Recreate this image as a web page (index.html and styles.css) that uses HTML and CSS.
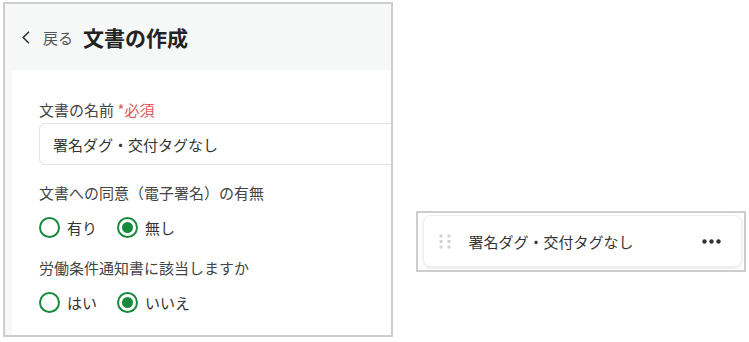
FILE: index.html
```html
<!DOCTYPE html>
<html lang="ja">
<head>
  <meta charset="UTF-8">
  <title>文書の作成</title>
  <meta name="viewport" content="width=device-width, initial-scale=1.0">
  <link rel="stylesheet" href="styles.css">
</head>
<body>

<div class="page">
  <div class="panel">
    <div class="header">
      <a href="#" class="back">
        <svg width="10" height="13" viewBox="0 0 10 13"><path d="M8 0.8 L2.2 6.5 L8 12.2" fill="none" stroke="#333" stroke-width="1.6"/></svg>
        <span>戻る</span>
      </a>
      <h1>文書の作成</h1>
    </div>

    <div class="form-card">
      <div class="label">文書の名前 <span class="required">*必須</span></div>
      <div class="input">署名ダグ・交付タグなし</div>

      <div class="label q">文書への同意（電子署名）の有無</div>
      <div class="radios">
        <label class="radio"><span class="circle"></span>有り</label>
        <label class="radio"><span class="circle checked"></span>無し</label>
      </div>

      <div class="label q2">労働条件通知書に該当しますか</div>
      <div class="radios">
        <label class="radio"><span class="circle"></span>はい</label>
        <label class="radio"><span class="circle checked"></span>いいえ</label>
      </div>
    </div>
  </div>

  <div class="side">
    <div class="item">
      <svg class="handle" width="12" height="15" viewBox="0 0 12 15">
        <circle cx="2" cy="2" r="1.7" fill="#d2d2d2"/>
        <circle cx="10" cy="2" r="1.7" fill="#d2d2d2"/>
        <circle cx="2" cy="7.5" r="1.7" fill="#d2d2d2"/>
        <circle cx="10" cy="7.5" r="1.7" fill="#d2d2d2"/>
        <circle cx="2" cy="13" r="1.7" fill="#d2d2d2"/>
        <circle cx="10" cy="13" r="1.7" fill="#d2d2d2"/>
      </svg>
      <span class="item-name">署名ダグ・交付タグなし</span>
      <svg class="more" width="19" height="5" viewBox="0 0 19 5">
        <circle cx="2.5" cy="2.5" r="2.2" fill="#333"/>
        <circle cx="9.5" cy="2.5" r="2.2" fill="#333"/>
        <circle cx="16.5" cy="2.5" r="2.2" fill="#333"/>
      </svg>
    </div>
  </div>
</div>

</body>
</html>
```

FILE: styles.css
```css
:root {
  --green: #188a3c;
  --border: #cdcdcd;
  --header-bg: #f6f8f7;
  --text: #333;
  --red: #e2585b;
}

* {
  box-sizing: border-box;
}

body {
  margin: 0;
  font-family: "Noto Sans CJK JP", "Noto Sans", sans-serif;
  background: #fff;
  color: var(--text);
}

.page {
  display: flex;
  align-items: flex-start;
  gap: 23px;
  padding: 2px 3px;
}

/* left panel */
.panel {
  width: 391px;
  height: 335px;
  border: 2px solid var(--border);
  background: var(--header-bg);
  overflow: hidden;
  display: flex;
  flex-direction: column;
}

.header {
  height: 66px;
  display: flex;
  align-items: center;
  padding-left: 16px;
  flex-shrink: 0;
}

.back {
  display: flex;
  align-items: center;
  gap: 12px;
  color: #555;
  text-decoration: none;
  font-size: 15px;
  margin-right: 10px;
}

.header h1 {
  margin: 0;
  font-size: 21px;
  font-weight: bold;
  color: #222;
  line-height: 1;
}

.form-card {
  flex: 1;
  margin-left: 7px;
  background: #fff;
  padding: 30px 0 0 27px;
}

.label {
  font-size: 15px;
  line-height: 20px;
  color: #444;
}

.required {
  color: var(--red);
}

.input {
  margin-top: 3px;
  width: 420px;
  height: 42px;
  border: 1px solid #e3e3e3;
  border-radius: 6px;
  padding-left: 13px;
  display: flex;
  align-items: center;
  font-size: 15px;
  color: var(--text);
}

.label.q {
  margin-top: 18px;
}

.label.q2 {
  margin-top: 20px;
}

.radios {
  display: flex;
  gap: 20px;
  margin-top: 14px;
  font-size: 15px;
  line-height: 20px;
  color: var(--text);
}

.radio {
  display: flex;
  align-items: center;
  gap: 7px;
}

.circle {
  width: 21px;
  height: 21px;
  border: 2px solid var(--green);
  border-radius: 50%;
  display: flex;
  align-items: center;
  justify-content: center;
}

.circle.checked::after {
  content: "";
  width: 11px;
  height: 11px;
  border-radius: 50%;
  background: var(--green);
}

/* right panel */
.side {
  margin-top: 209px;
  width: 330px;
  height: 61px;
  border: 2px solid var(--border);
  padding: 2px 2px 3px 5px;
}

.item {
  height: 52px;
  border: 1px solid #efefef;
  border-radius: 8px;
  box-shadow: 0 1px 3px rgba(0,0,0,0.12);
  display: flex;
  align-items: center;
  padding: 0 20px 0 15px;
}

.handle {
  margin-right: 17px;
}

.item-name {
  flex: 1;
  font-size: 15px;
  color: var(--text);
}
```
